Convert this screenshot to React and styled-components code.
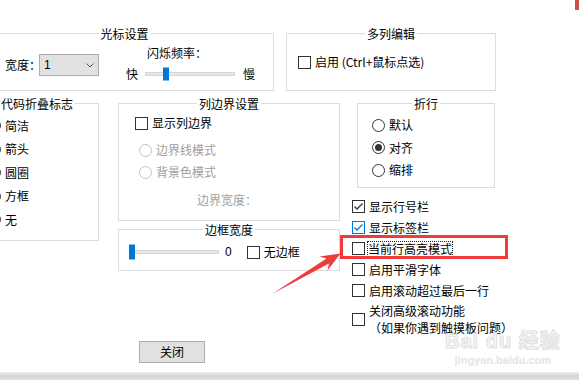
import React from "react";
import styled, { createGlobalStyle } from "styled-components";

const GlobalStyle = createGlobalStyle`
  html, body {
    margin: 0;
    padding: 0;
    background: #fff;
  }
  body {
    font-family: "Noto Sans CJK SC", "Noto Sans", sans-serif;
    font-size: 12px;
    color: #000;
  }
`;

const Page = styled.div`
  position: relative;
  width: 579px;
  height: 380px;
  overflow: hidden;
  display: flex;
  flex-direction: column;
`;

const Content = styled.div`
  margin-left: -25px;
  padding-top: 33px;
  display: flex;
  flex-direction: column;
`;

const Row = styled.div`
  display: flex;
  align-items: flex-start;
  margin-top: ${(p) => p.$mt || 0}px;
`;

const Column = styled.div`
  display: flex;
  flex-direction: column;
  width: ${(p) => p.$w}px;
  margin-left: ${(p) => p.$ml || 0}px;
  gap: ${(p) => p.$gap || 0}px;
`;

const Group = styled.div`
  position: relative;
  box-sizing: border-box;
  flex: none;
  width: ${(p) => p.$w}px;
  height: ${(p) => p.$h}px;
  margin-left: ${(p) => p.$ml || 0}px;
  padding: ${(p) => p.$pad || "0"};
  border: 1px solid #dcdcdc;
  display: flex;
  flex-direction: ${(p) => (p.$row ? "row" : "column")};
  align-items: flex-start;
`;

const Legend = styled.span`
  position: absolute;
  top: -8px;
  left: 50%;
  transform: translateX(-50%);
  padding: 0 2px;
  background: #fff;
  line-height: 16px;
  white-space: nowrap;
`;

const Text = styled.span`
  line-height: 16px;
  white-space: nowrap;
  color: ${(p) => (p.$disabled ? "#a0a0a0" : "#000")};
  margin-left: ${(p) => p.$ml || 0}px;
  margin-top: ${(p) => p.$mt || 0}px;
`;

const FocusText = styled(Text)`
  outline: 1px dotted #222;
  outline-offset: -1px;
  padding: 0 1px;
  margin-left: -2px;
`;

const Field = styled.div`
  display: flex;
  align-items: center;
  margin: ${(p) => p.$m || "0"};
`;

const Label = styled.span`
  width: ${(p) => p.$w}px;
  line-height: 16px;
  white-space: nowrap;
`;

const Select = styled.div`
  box-sizing: border-box;
  width: 60px;
  height: 22px;
  padding: 0 4px;
  display: flex;
  align-items: center;
  justify-content: space-between;
  background: #e1e1e1;
  border: 1px solid #adadad;
  font-family: "Liberation Sans", sans-serif;
`;

const BlinkBlock = styled.div`
  display: flex;
  flex-direction: column;
  margin: 11px 0 0 27px;
`;

const SliderRow = styled.div`
  display: flex;
  align-items: center;
  height: ${(p) => p.$h || 16}px;
  margin-top: ${(p) => p.$mt || 0}px;
`;

const Track = styled.div`
  position: relative;
  box-sizing: border-box;
  width: ${(p) => p.$w}px;
  height: 4px;
  margin-left: ${(p) => p.$ml || 0}px;
  background: #e7e7e7;
  border: 1px solid #d6d6d6;
`;

const Thumb = styled.span`
  position: absolute;
  top: 50%;
  left: ${(p) => p.$left}px;
  width: 6px;
  height: ${(p) => p.$h}px;
  transform: translateY(-50%);
  background: #0078d7;
`;

const Value = styled.span`
  font-family: "Liberation Sans", sans-serif;
  line-height: 16px;
  margin-left: ${(p) => p.$ml || 0}px;
`;

const OptionRow = styled.div`
  display: flex;
  align-items: center;
  gap: 4px;
  height: ${(p) => p.$h || 16}px;
  margin-left: ${(p) => p.$ml || 0}px;
  margin-top: ${(p) => p.$mt || 0}px;
`;

const Box = styled.span`
  position: relative;
  box-sizing: border-box;
  flex: none;
  width: 13px;
  height: 13px;
  background: #fff;
  border: 1px solid ${(p) => (p.$blue ? "#0078d7" : "#333")};
  svg {
    position: absolute;
    left: 0;
    top: 0;
  }
`;

const Radio = styled.span`
  box-sizing: border-box;
  flex: none;
  width: 13px;
  height: 13px;
  border-radius: 50%;
  background: #fff;
  border: 1px solid ${(p) => (p.$disabled ? "#c4c4c4" : "#333")};
  display: flex;
  align-items: center;
  justify-content: center;
  &::after {
    content: "";
    display: ${(p) => (p.$checked ? "block" : "none")};
    width: 7px;
    height: 7px;
    border-radius: 50%;
    background: #333;
  }
`;

const List = styled.div`
  display: flex;
  flex-direction: column;
  margin-top: 8px;
`;

const TwoLines = styled.div`
  display: flex;
  flex-direction: column;
  line-height: 17px;
  white-space: nowrap;
`;

const ButtonRow = styled.div`
  display: flex;
  padding-left: 164px;
  margin-top: 5px;
`;

const CloseButton = styled.button`
  box-sizing: border-box;
  width: 66px;
  height: 22px;
  padding: 0;
  background: #e1e1e1;
  border: 1px solid #adadad;
  font-family: inherit;
  font-size: 12px;
  line-height: 16px;
  color: #000;
`;

const Shadow = styled.div`
  margin-top: auto;
  height: 8px;
  background: linear-gradient(to bottom, #ededed, #d4d4d4 50%, #e2e2e2);
`;

const Highlight = styled.div`
  position: absolute;
  left: 340px;
  top: 235px;
  width: 168px;
  height: 24px;
  box-sizing: border-box;
  border: 3px solid #f03b3b;
  pointer-events: none;
`;

const Overlay = styled.svg`
  position: absolute;
  left: 0;
  top: 0;
  pointer-events: none;
`;

const CornerMark = styled.div`
  position: absolute;
  right: 0;
  top: 0;
  width: 4px;
  height: 10px;
  background: #c9504c;
`;

const Watermark = styled.div`
  position: absolute;
  left: 445px;
  top: 330px;
  display: flex;
  flex-direction: column;
  align-items: center;
  pointer-events: none;
  font-family: "Liberation Sans", "Noto Sans CJK SC", sans-serif;
  font-weight: bold;
`;

const MarkBig = styled.span`
  font-size: 20px;
  line-height: 23px;
  color: #f8f8f8;
  -webkit-text-stroke: 1px #e0e0e0;
  letter-spacing: 1px;
`;

const MarkSmall = styled.span`
  font-size: 11px;
  line-height: 14px;
  color: #e4e4e4;
`;

const Check = ({ color }) => (
  <svg width="11" height="11" viewBox="0 0 11 11">
    <polyline points="1.5,5.5 4,8 9.5,2.5" fill="none" stroke={color} strokeWidth="1.3" />
  </svg>
);

const CheckItem = ({ checked, blue, children, ...rest }) => (
  <OptionRow {...rest}>
    <Box $blue={blue}>{checked && <Check color={blue ? "#0078d7" : "#333"} />}</Box>
    {children}
  </OptionRow>
);

const RadioItem = ({ checked, disabled, children, ...rest }) => (
  <OptionRow {...rest}>
    <Radio $checked={checked} $disabled={disabled} />
    <Text $disabled={disabled}>{children}</Text>
  </OptionRow>
);

const foldMarks = ["简洁", "箭头", "圆圈", "方框", "无"];

export default function App() {
  return (
    <>
      <GlobalStyle />
      <Page>
        <Content>
          <Row>
            <Group $w={299} $h={58} $row>
              <Legend>光标设置</Legend>
              <Field $m="20px 0 0 29px">
                <Label $w={34}>宽度：</Label>
                <Select>
                  <span>1</span>
                  <svg width="8" height="5" viewBox="0 0 8 5">
                    <polyline points="0.5,0.5 4,4 7.5,0.5" fill="none" stroke="#555" strokeWidth="1" />
                  </svg>
                </Select>
              </Field>
              <BlinkBlock>
                <Text $ml={21}>闪烁频率：</Text>
                <SliderRow $mt={5}>
                  <Text>快</Text>
                  <Track $w={90} $ml={7}>
                    <Thumb $left={17} $h={13} />
                  </Track>
                  <Text $ml={8}>慢</Text>
                </SliderRow>
              </BlinkBlock>
            </Group>
            <Group $w={210} $h={58} $ml={12} $pad="20px 0 0 11px">
              <Legend>多列编辑</Legend>
              <CheckItem>
                <Text>启用 (Ctrl+鼠标点选)</Text>
              </CheckItem>
            </Group>
          </Row>

          <Row $mt={12}>
            <Group $w={124} $h={138} $pad="10px 0 0 12px">
              <Legend>代码折叠标志</Legend>
              {foldMarks.map((m) => (
                <RadioItem key={m} $h={23.5}>
                  {m}
                </RadioItem>
              ))}
            </Group>

            <Column $w={222} $ml={19} $gap={8}>
              <Group $w={222} $h={118} $pad="11px 0 0 0">
                <Legend>列边界设置</Legend>
                <CheckItem $ml={16}>
                  <Text>显示列边界</Text>
                </CheckItem>
                <RadioItem disabled $ml={20} $mt={8} $h={22}>
                  边界线模式
                </RadioItem>
                <RadioItem disabled $ml={20} $h={22}>
                  背景色模式
                </RadioItem>
                <Text $disabled $ml={78} $mt={9}>
                  边界宽度：
                </Text>
              </Group>
              <Group $w={222} $h={42} $pad="13px 0 0 10px">
                <Legend>边框宽度</Legend>
                <SliderRow $h={18}>
                  <Track $w={90}>
                    <Thumb $left={-1} $h={15} />
                  </Track>
                  <Value $ml={6}>0</Value>
                  <CheckItem $ml={15}>
                    <Text>无边框</Text>
                  </CheckItem>
                </SliderRow>
              </Group>
            </Column>

            <Column $w={143} $ml={12}>
              <Group $w={138} $h={85} $ml={5} $pad="10px 0 0 14px">
                <Legend>折行</Legend>
                <RadioItem $h={22.5}>默认</RadioItem>
                <RadioItem checked $h={22.5}>
                  对齐
                </RadioItem>
                <RadioItem $h={22.5}>缩排</RadioItem>
              </Group>
              <List>
                <CheckItem checked $h={21}>
                  <Text>显示行号栏</Text>
                </CheckItem>
                <CheckItem checked blue $h={21}>
                  <Text>显示标签栏</Text>
                </CheckItem>
                <CheckItem $h={21}>
                  <FocusText>当前行高亮模式</FocusText>
                </CheckItem>
                <CheckItem $h={21}>
                  <Text>启用平滑字体</Text>
                </CheckItem>
                <CheckItem $h={21}>
                  <Text>启用滚动超过最后一行</Text>
                </CheckItem>
                <CheckItem $h={34} $mt={1}>
                  <TwoLines>
                    <span>关闭高级滚动功能</span>
                    <span>（如果你遇到触摸板问题）</span>
                  </TwoLines>
                </CheckItem>
              </List>
            </Column>
          </Row>

          <ButtonRow>
            <CloseButton>关闭</CloseButton>
          </ButtonRow>
        </Content>
        <Shadow />

        <Watermark>
          <MarkBig>Bai du 经验</MarkBig>
          <MarkSmall>jingyan.baidu.com</MarkSmall>
        </Watermark>

        <Highlight />
        <Overlay width="579" height="380" viewBox="0 0 579 380">
          <polygon
            points="272,294 329,263.5 327.5,270.5 340.5,253.5 319.5,256.5 326.5,258.5"
            fill="#f03b3b"
          />
        </Overlay>
        <CornerMark />
      </Page>
    </>
  );
}
